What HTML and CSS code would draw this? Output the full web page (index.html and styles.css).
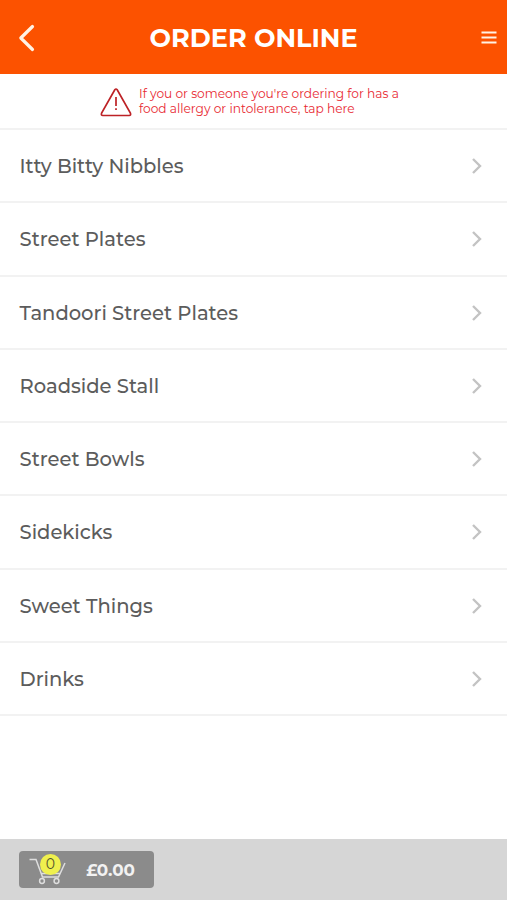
FILE: index.html
```html
<!DOCTYPE html>
<html lang="en">
<head>
<meta charset="utf-8">
<title>Order Online</title>
<link rel="stylesheet" href="styles.css">
</head>
<body>
<header class="header">
  <svg class="back" width="24" height="30" viewBox="0 0 24 30"><path d="M17.500 3.500 5.800 15l11.700 11.500"/></svg>
  <h1 class="title">ORDER ONLINE</h1>
  <svg class="menu" width="16" height="14" viewBox="0 0 16 14"><path d="M.5 1.500h15M.5 6.500h15M.5 11.500h15"/></svg>
</header>
<div class="allergy">
  <svg class="warning" width="32" height="30" viewBox="0 0 32 30"><path d="M14.800 2.800Q16 1.200 17.200 2.800L30.400 26Q31.200 28.500 29.200 28.500H2.800Q.800 28.500 1.600 26Z"/><path d="M16 10v9M16 21.200v1.800"/></svg>
  <p class="notice">If you or someone you're ordering for has a<br>food allergy or intolerance, tap here</p>
</div>
<main class="list">
  <div class="row"><span>Itty Bitty Nibbles</span><svg class="chevron" viewBox="0 0 12 18"><path d="m2 2 7 7-7 7"/></svg></div>
  <div class="row"><span>Street Plates</span><svg class="chevron" viewBox="0 0 12 18"><path d="m2 2 7 7-7 7"/></svg></div>
  <div class="row"><span>Tandoori Street Plates</span><svg class="chevron" viewBox="0 0 12 18"><path d="m2 2 7 7-7 7"/></svg></div>
  <div class="row"><span>Roadside Stall</span><svg class="chevron" viewBox="0 0 12 18"><path d="m2 2 7 7-7 7"/></svg></div>
  <div class="row"><span>Street Bowls</span><svg class="chevron" viewBox="0 0 12 18"><path d="m2 2 7 7-7 7"/></svg></div>
  <div class="row"><span>Sidekicks</span><svg class="chevron" viewBox="0 0 12 18"><path d="m2 2 7 7-7 7"/></svg></div>
  <div class="row"><span>Sweet Things</span><svg class="chevron" viewBox="0 0 12 18"><path d="m2 2 7 7-7 7"/></svg></div>
  <div class="row"><span>Drinks</span><svg class="chevron" viewBox="0 0 12 18"><path d="m2 2 7 7-7 7"/></svg></div>
</main>
<footer class="footer">
  <div class="basket">
    <div class="cart">
      <svg width="38" height="28" viewBox="0 0 38 28"><path d="M.5 2.500h6.500l6.500 17.500h16L36 6M12 16.500h18.500"/><circle cx="13" cy="24" r="2.400"/><circle cx="27.500" cy="24" r="2.400"/></svg>
      <span class="count">0</span>
    </div>
    <span class="total">£0.00</span>
  </div>
</footer>
</body>
</html>
```
FILE: styles.css
```css
* { box-sizing: border-box; }
body {
  margin: 0;
  height: 900px;
  display: flex;
  flex-direction: column;
  overflow: hidden;
  background: #fff;
  color: #5c5c5c;
  font-family: Montserrat, Inter, sans-serif;
}
svg { fill: none; flex: none; display: block; }
.header {
  height: 74px;
  padding: 2px 10px 0 15px;
  display: grid;
  grid-template-columns: 60px 1fr 60px;
  align-items: center;
  background: #fc5200;
  color: #fff;
}
.back { stroke: #fff3e5; stroke-width: 3.2; stroke-linecap: round; stroke-linejoin: round; }
.title { margin: 0 5px 0 0; text-align: center; font-size: 25.5px; line-height: 30px; font-weight: 700; white-space: nowrap; }
.menu { justify-self: end; stroke: #fff3e5; stroke-width: 2; }
.allergy {
  height: 56px;
  padding: 0 0 0 100px;
  display: flex;
  align-items: center;
  gap: 7px;
  border-bottom: 2px solid #f2f2f2;
}
.warning { position: relative; top: .5px; stroke: #bd2226; stroke-width: 1.7; }
.notice { margin: 0; font-size: 12.2px; line-height: 15px; color: #e82932; white-space: nowrap; }
.list { flex: 1; }
.row {
  height: 73.25px;
  padding: 1px 24px 0 19.5px;
  display: flex;
  align-items: center;
  justify-content: space-between;
  border-bottom: 2px solid #f2f2f2;
  font-size: 19.55px;
  font-weight: 500;
  line-height: 26px;
}
.chevron { width: 12px; height: 18px; stroke: #c3c3c3; stroke-width: 2.4; }
.footer { height: 61px; padding: 12px 19px; background: #d6d6d6; }
.basket {
  width: 135px;
  height: 37px;
  padding: 0 19px 0 10px;
  display: flex;
  align-items: center;
  justify-content: space-between;
  border-radius: 4px;
  background: #8b8b8b;
}
.cart { position: relative; width: 38px; height: 28px; top: 1px; }
.cart svg { stroke: #dedede; stroke-width: 1.5; }
.count {
  position: absolute;
  left: 11px;
  top: -3px;
  width: 21px;
  height: 21px;
  border-radius: 50%;
  background: #eff04e;
  color: #55552e;
  font-size: 14px;
  line-height: 21px;
  text-align: center;
}
.total { color: #f2f2f2; font-size: 16.8px; font-weight: 700; }
```
